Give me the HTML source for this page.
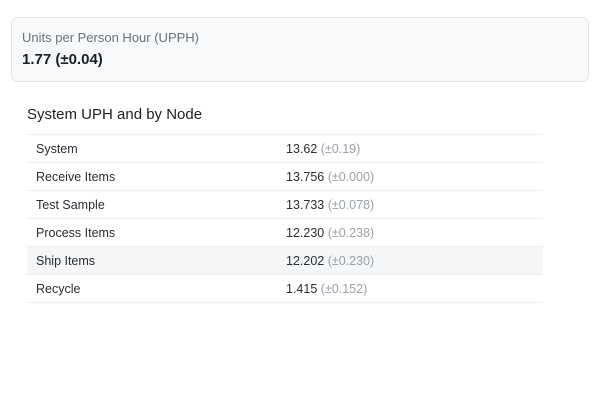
<!DOCTYPE html>
<html><head><style>
body{margin:0;width:600px;height:400px;background:#fff;font-family:"Liberation Sans",sans-serif;position:relative;overflow:hidden}
.card{position:absolute;left:11px;top:17px;width:578px;height:65px;border:1px solid #e2e4e8;border-radius:7px;background:#f8f9fa;box-sizing:border-box}
.lbl{position:absolute;left:10px;top:12px;font-size:13px;color:#6b7079}
.val{position:absolute;left:10px;top:33px;font-size:15px;font-weight:bold;color:#1c1f24}
.title{position:absolute;left:27px;top:106px;font-size:15px;color:#1c1f24}
table{position:absolute;left:27px;top:134px;width:516px;border-collapse:collapse;font-size:12.5px;color:#2a2d33}
td{height:27px;border-top:1px solid #eceef1;padding:0;vertical-align:middle}
tr:last-child td{border-bottom:1px solid #eceef1}
td.a{padding-left:9px;width:250px}
.g{color:#9aa0a8}
tr.h td{background:#f5f6f8}
</style></head><body>
<div class="card"><div class="lbl">Units per Person Hour (UPPH)</div><div class="val">1.77 (±0.04)</div></div>
<div class="title">System UPH and by Node</div>
<table>
<tr><td class="a">System</td><td>13.62 <span class="g">(±0.19)</span></td></tr>
<tr><td class="a">Receive Items</td><td>13.756 <span class="g">(±0.000)</span></td></tr>
<tr><td class="a">Test Sample</td><td>13.733 <span class="g">(±0.078)</span></td></tr>
<tr><td class="a">Process Items</td><td>12.230 <span class="g">(±0.238)</span></td></tr>
<tr class="h"><td class="a">Ship Items</td><td>12.202 <span class="g">(±0.230)</span></td></tr>
<tr><td class="a">Recycle</td><td>1.415 <span class="g">(±0.152)</span></td></tr>
</table>
</body></html>
